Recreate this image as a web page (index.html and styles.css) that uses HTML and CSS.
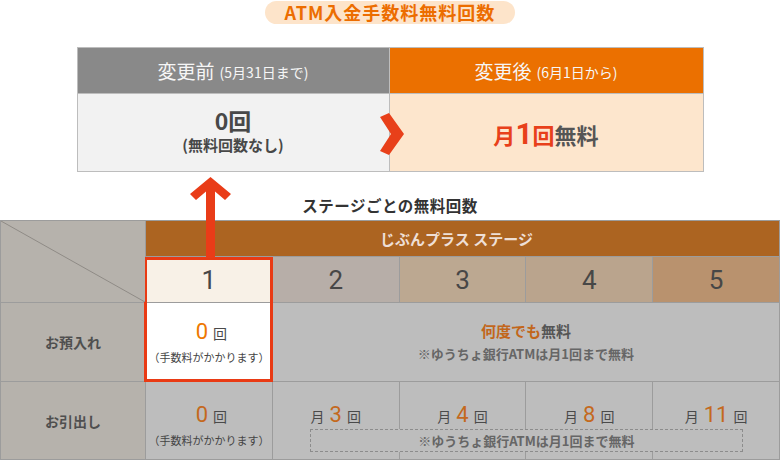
FILE: index.html
```html
<!DOCTYPE html>
<html lang="ja">
<head>
<meta charset="utf-8">
<link rel="stylesheet" href="styles.css">
</head>
<body>
<div class="page">
  <div class="title-wrap"><span class="title">ATM入金手数料無料回数</span></div>

  <div class="compare">
    <div class="head head-before">変更前<small>(5月31日まで)</small></div>
    <div class="head head-after">変更後<small>(6月1日から)</small></div>
    <div class="cbody cbody-before">
      <div class="zero">0回</div>
      <div class="none">(無料回数なし)</div>
    </div>
    <div class="cbody cbody-after">
      <div class="monthly"><span class="red">月<span class="big">1</span>回</span>無料</div>
    </div>
    <svg class="chevron" width="26" height="42" viewBox="0 0 26 42"><polygon points="1,4 10,0 25,21 10,42 1,38 12,21" fill="#e8401a"/></svg>
  </div>

  <div class="subtitle">ステージごとの無料回数</div>

  <div class="stages">
    <div class="corner"><svg class="diag" viewBox="0 0 100 100" preserveAspectRatio="none"><line x1="0" y1="0" x2="100" y2="100" stroke="#8f8b86" stroke-width="1" vector-effect="non-scaling-stroke"/></svg></div>
    <div class="band">じぶんプラス ステージ</div>

    <div class="stage s1">1</div>
    <div class="stage s2">2</div>
    <div class="stage s3">3</div>
    <div class="stage s4">4</div>
    <div class="stage s5">5</div>

    <div class="rowhead r-dep">お預入れ</div>
    <div class="cell dep1">
      <div class="count"><span class="num bright">0</span><span class="kai">回</span></div>
      <div class="fee">（手数料がかかります）</div>
    </div>
    <div class="cell depall">
      <div class="free"><span class="any">何度でも</span>無料</div>
      <div class="note">※ゆうちょ銀行ATMは月1回まで無料</div>
    </div>

    <div class="rowhead r-wd">お引出し</div>
    <div class="cell wd wd1">
      <div class="count"><span class="num">0</span><span class="kai">回</span></div>
      <div class="fee">（手数料がかかります）</div>
    </div>
    <div class="cell wd wd2"><div class="count"><span class="kai">月</span><span class="num">3</span><span class="kai">回</span></div></div>
    <div class="cell wd wd3"><div class="count"><span class="kai">月</span><span class="num">4</span><span class="kai">回</span></div></div>
    <div class="cell wd wd4"><div class="count"><span class="kai">月</span><span class="num">8</span><span class="kai">回</span></div></div>
    <div class="cell wd wd5"><div class="count"><span class="kai">月</span><span class="num">11</span><span class="kai">回</span></div></div>
    <div class="wdnote">※ゆうちょ銀行ATMは月1回まで無料</div>

    <div class="redframe"></div>
  </div>

  <svg class="uparrow" width="41" height="81" viewBox="0 0 41 81"><polygon points="20.5,0 41,17 35,23 25,14.5 25,81 16,81 16,14.5 6,23 0,17" fill="#e93c18"/></svg>
</div>
</body>
</html>
```

FILE: styles.css
```css
html, body {
  margin: 0;
  padding: 0;
  background: #fff;
}

.page {
  position: relative;
  width: 780px;
  height: 460px;
  overflow: hidden;
  font-family: "Noto Sans CJK JP", "Noto Sans", sans-serif;
  color: #444;
}

.title-wrap {
  display: flex;
  justify-content: center;
  padding-top: 1px;
}

.title {
  display: block;
  width: 250px;
  height: 23px;
  border-radius: 12px;
  background: #fde4ca;
  color: #ec6d00;
  font-size: 18px;
  font-weight: bold;
  line-height: 23px;
  text-align: center;
  letter-spacing: 1px;
}

.compare {
  position: relative;
  width: 627px;
  box-sizing: border-box;
  margin: 23px auto 0;
  display: grid;
  grid-template-columns: 311px 314px;
  grid-template-rows: 46px 77px;
  border: 1px solid #bdbdbd;
}

.head {
  display: flex;
  align-items: center;
  justify-content: center;
  color: #f6f6f6;
  font-size: 19px;
  line-height: 1;
  border-bottom: 1px solid #bdbdbd;
}

.head small {
  font-size: 14px;
  margin-left: 5px;
  margin-top: 2px;
}

.head-before { background: #898989; }
.head-after { background: #eb7000; border-left: 1px solid #bdbdbd; }

.cbody {
  display: flex;
  flex-direction: column;
  align-items: center;
  justify-content: center;
}

.cbody-before { background: #f2f2f2; }
.cbody-after { background: #fde6cd; border-left: 1px solid #bdbdbd; }

.zero {
  font-size: 23px;
  font-weight: bold;
  line-height: 28px;
  color: #484848;
  margin-top: -4px;
}

.none {
  font-size: 15px;
  font-weight: bold;
  line-height: 22px;
  color: #484848;
}

.monthly {
  font-size: 22px;
  font-weight: bold;
  color: #555;
  line-height: 30px;
  margin-top: 2px;
}

.monthly .red { color: #e8401a; }
.monthly .big { font-size: 30px; font-family: "Roboto", sans-serif; }

.chevron {
  position: absolute;
  left: 301px;
  top: 65px;
}

.subtitle {
  height: 48px;
  box-sizing: border-box;
  padding-top: 24px;
  text-align: center;
  font-size: 15.5px;
  font-weight: bold;
  line-height: 18px;
  color: #333;
  letter-spacing: 0.5px;
}

.stages {
  position: relative;
  width: 780px;
  height: 240px;
  box-sizing: border-box;
  padding: 1px;
  background: #9c9c9c;
  display: grid;
  grid-template-columns: 144px repeat(5, 1fr);
  grid-template-rows: 35px 45px 78px 77px;
  gap: 1px;
}

.corner {
  grid-column: 1;
  grid-row: 1 / 3;
  background: #b6b2ac;
  position: relative;
}

.diag {
  display: block;
  width: 100%;
  height: 100%;
}

.band {
  grid-column: 2 / 7;
  grid-row: 1;
  background: #ac6421;
  color: #eedfd6;
  font-size: 15px;
  font-weight: bold;
  display: flex;
  align-items: center;
  justify-content: center;
  padding-right: 12px;
}

.stage {
  grid-row: 2;
  display: flex;
  align-items: center;
  justify-content: center;
  font-family: "Roboto", sans-serif;
  font-size: 26px;
  color: #474747;
  padding-top: 1px;
}

.s1 { grid-column: 2; background: #f8f1e7; }
.s2 { grid-column: 3; background: #b7aea8; }
.s3 { grid-column: 4; background: #bca891; }
.s4 { grid-column: 5; background: #baa48d; }
.s5 { grid-column: 6; background: #b9926e; }

.rowhead {
  grid-column: 1;
  background: #b6b2ac;
  display: flex;
  align-items: center;
  justify-content: center;
  font-size: 14px;
  font-weight: bold;
  color: #4f4f4f;
}

.r-dep { grid-row: 3; }
.r-wd { grid-row: 4; }

.cell {
  background: #bdbdbd;
  display: flex;
  flex-direction: column;
  align-items: center;
  justify-content: center;
}

.dep1 { grid-column: 2; grid-row: 3; background: #fff; }
.depall { grid-column: 3 / 7; grid-row: 3; }

.wd { grid-row: 4; justify-content: flex-start; padding-top: 20px; }
.wd1 { grid-column: 2; }
.wd2 { grid-column: 3; }
.wd3 { grid-column: 4; }
.wd4 { grid-column: 5; }
.wd5 { grid-column: 6; }

.count {
  display: flex;
  align-items: baseline;
  line-height: 26px;
}

.num {
  font-family: "Roboto", sans-serif;
  font-size: 22px;
  color: #c4691d;
  margin: 0 5px;
}

.num.bright { color: #ee7800; }

.kai {
  font-size: 14px;
  color: #4a4a4a;
}

.fee {
  font-size: 11px;
  color: #444;
  line-height: 18px;
  margin-top: 2px;
}

.free {
  font-size: 15px;
  font-weight: bold;
  color: #555;
  line-height: 22px;
}

.free .any { color: #c2661b; }

.note {
  font-size: 13px;
  font-weight: bold;
  color: #666;
  line-height: 20px;
  margin-top: 2px;
}

.wdnote {
  grid-column: 3 / 7;
  grid-row: 4;
  align-self: end;
  margin: 0 36px 7px 37px;
  height: 23px;
  box-sizing: border-box;
  border: 1px dashed #8c8c8c;
  background: #bdbdbd;
  font-size: 13px;
  font-weight: bold;
  color: #666;
  line-height: 21px;
  text-align: center;
}

.redframe {
  grid-column: 2;
  grid-row: 2 / 4;
  margin: 0 -1px -1px -2px;
  border: 3px solid #e93a14;
  pointer-events: none;
}

.uparrow {
  position: absolute;
  left: 190px;
  top: 177px;
}
```
